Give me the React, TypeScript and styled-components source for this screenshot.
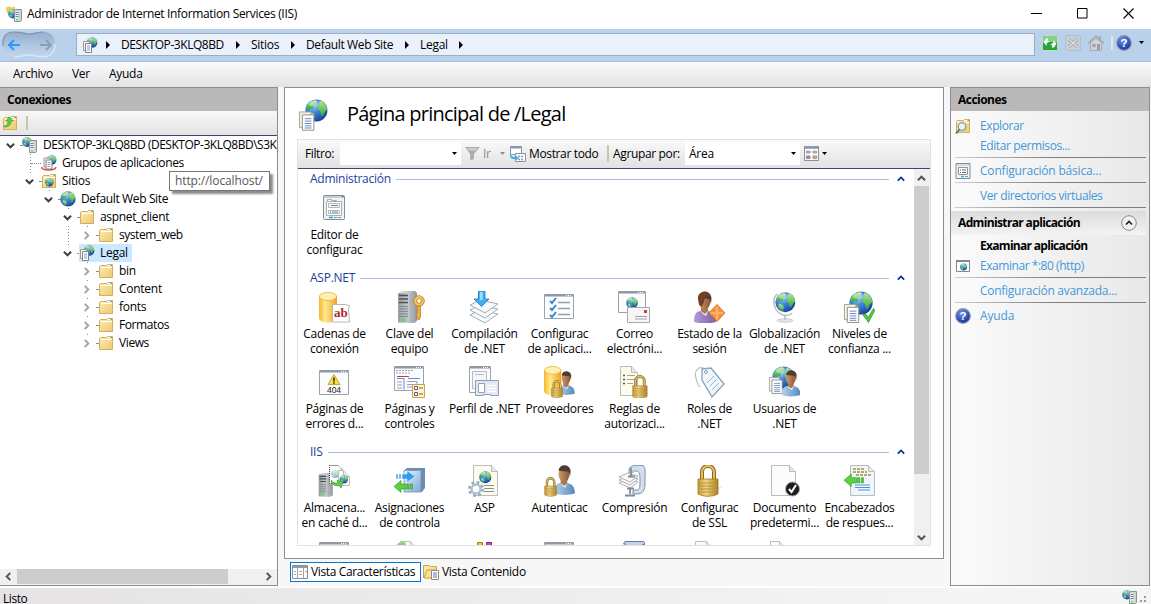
import React from "react";
import styled, { createGlobalStyle } from "styled-components";

const GlobalStyle = createGlobalStyle`
  * { box-sizing: border-box; }
  body { margin: 0; background: #f7f7f7; overflow: hidden; }
  svg { display: block; flex: none; }
`;

/* ---------- layout ---------- */

const Window = styled.div`
  width: 1151px;
  height: 604px;
  display: flex;
  flex-direction: column;
  overflow: hidden;
  background: #f7f7f7;
  color: #000;
  font: 12px/18px "Open Sans", "Noto Sans", sans-serif;
  letter-spacing: -0.27px;
  white-space: nowrap;
`;

const TitleBar = styled.header`
  height: 29px;
  flex: none;
  display: flex;
  align-items: center;
  padding: 0 17px 2px 6px;
  background: #fff;
`;

const TitleText = styled.h1`
  flex: 1;
  margin: 0 0 0 5px;
  font: inherit;
  letter-spacing: -0.34px;
`;

const WindowControls = styled.div`
  display: flex;
  gap: 35px;
`;

const NavBar = styled.nav`
  height: 33px;
  flex: none;
  display: flex;
  align-items: center;
  background: #b9d1ea;
  border-bottom: 1px solid #a5bad8;
  padding: 0 8px 1px 2px;
`;

const AddressBar = styled.div`
  width: 959px;
  height: 23px;
  margin: 0 7px 0 20px;
  padding: 0 0 0 5px;
  flex: none;
  display: flex;
  align-items: center;
  background: #ebf1fa;
  border: 1px solid #9aaec9;
`;

const Crumb = styled.span<{ $w: number; $ls?: number }>`
  width: ${(p) => p.$w}px;
  margin-left: 11px;
  letter-spacing: ${(p) => p.$ls ?? -0.27}px;
`;

const NavTools = styled.div`
  display: flex;
  align-items: center;
  gap: 7px;
  padding-bottom: 4px;
`;

const MenuBar = styled.div`
  height: 25px;
  flex: none;
  display: flex;
  align-items: center;
  gap: 19px;
  padding: 0 13px 1px;
  background: linear-gradient(#fbfbfb, #e4e2e3);
`;

const Body = styled.main`
  height: 499px;
  flex: none;
  display: flex;
`;

const SidePanel = styled.aside<{ $width: number; $right?: boolean }>`
  width: ${(p) => p.$width}px;
  display: flex;
  flex-direction: column;
  border: 1px solid #8e8c8d;
  border-left-width: ${(p) => (p.$right ? 1 : 0)}px;
  background: ${(p) =>
    p.$right ? "linear-gradient(to right, #fbfbfb, #e9e8e9)" : "#fff"};
`;

const PanelTitle = styled.h2`
  height: 23px;
  flex: none;
  margin: 0;
  padding: 3px 7px;
  background: #bbb8ba;
  font: bold 12px/18px "Open Sans", "Noto Sans", sans-serif;
  letter-spacing: -0.52px;
`;

const TreeTools = styled.div`
  height: 25px;
  flex: none;
  display: flex;
  align-items: center;
  gap: 8px;
  padding-left: 2px;
  background: linear-gradient(#f8f8f8, #e4e2e3);
  border-bottom: 1px solid #44446a;
`;

const Separator = styled.i<{ $h: number; $color?: string; $gap?: string }>`
  width: 2px;
  height: ${(p) => p.$h}px;
  margin: ${(p) => p.$gap ?? "0"};
  flex: none;
  background: ${(p) => p.$color ?? "#c6c5b2"};
`;

const Tree = styled.div`
  flex: 1;
  position: relative;
`;

const TreeRow = styled.div`
  height: 18px;
  display: flex;
  align-items: center;
  padding-left: 1px;
`;

const Guide = styled.span<{ $line?: boolean }>`
  width: 19px;
  height: 18px;
  flex: none;
  display: flex;
  align-items: center;
  justify-content: center;
  background: ${(p) =>
    p.$line
      ? "repeating-linear-gradient(#8a8a8a 0 1px, transparent 1px 3px) 10px 0 / 1px 18px no-repeat"
      : "none"};
`;

const Twisty = styled.span`
  width: 13px;
  height: 14px;
  display: flex;
  align-items: center;
  justify-content: center;
  background: #fff;
`;

const Stub = styled.span<{ $wide?: boolean }>`
  width: ${(p) => (p.$wide ? 10 : 2)}px;
  margin-left: ${(p) => (p.$wide ? -8 : 0)}px;
  flex: none;
  border-top: 1px dotted #8a8a8a;
`;

const TreeLabel = styled.span<{ $selected?: boolean; $ls?: number }>`
  height: 18px;
  padding: 0 4px 0 0;
  display: flex;
  align-items: center;
  gap: 5px;
  letter-spacing: ${(p) => p.$ls ?? -0.27}px;
  background: ${(p) => (p.$selected ? "#cce8ff" : "transparent")};
`;

const Tooltip = styled.div`
  position: absolute;
  left: 169px;
  top: 35px;
  width: 101px;
  height: 20px;
  padding-left: 5px;
  background: #fff;
  border: 1px solid #767676;
  box-shadow: 3px 3px 2px rgba(0, 0, 0, 0.45);
  color: #575757;
  letter-spacing: -0.12px;
`;

const HScroll = styled.div`
  height: 16px;
  flex: none;
  display: flex;
  align-items: center;
  justify-content: space-between;
  padding: 0 4px 2px;
  background: linear-gradient(#cdcdcd, #cdcdcd) 17px 0 / 211px 15px no-repeat
    #f0f0f0;
`;

const Center = styled.section`
  width: 672px;
  padding: 0 6px;
  display: flex;
  flex-direction: column;
`;

const Page = styled.div`
  height: 472px;
  flex: none;
  display: flex;
  flex-direction: column;
  background: #fff;
  border: 1px solid #8e8c8d;
  padding: 0 12px 12px;
`;

const PageHead = styled.div`
  height: 51px;
  flex: none;
  display: flex;
  align-items: center;
  gap: 16px;
  padding: 3px 0 0 2px;
`;

const PageTitle = styled.h3`
  margin: -3px 0 0;
  font: 20px/26px "Open Sans", "Noto Sans", sans-serif;
  letter-spacing: -0.76px;
`;

const FeatureBox = styled.div`
  height: 407px;
  display: flex;
  flex-direction: column;
  border: 1px solid #e2e1e2;
`;

const FilterBar = styled.div`
  height: 29px;
  flex: none;
  display: flex;
  align-items: center;
  padding: 0 0 1px 7px;
  background: linear-gradient(#fafafa, #e3e1e2);
  border-bottom: 1px solid #44446a;
`;

const FilterLabel = styled.span<{ $w: number; $muted?: boolean; $ls?: number; $left?: number }>`
  width: ${(p) => p.$w}px;
  margin-left: ${(p) => p.$left ?? 3}px;
  flex: none;
  color: ${(p) => (p.$muted ? "#8d8d8d" : "#000")};
  letter-spacing: ${(p) => p.$ls ?? -0.27}px;
`;

const Combo = styled.div<{ $w: number }>`
  width: ${(p) => p.$w}px;
  height: 23px;
  margin-right: 4px;
  flex: none;
  display: flex;
  align-items: center;
  justify-content: space-between;
  padding: 0 4px;
  background: #fff;
`;

const MenuCaret = styled.span<{ $left: number; $right?: number }>`
  margin: 0 ${(p) => p.$right ?? 0}px 0 ${(p) => p.$left}px;
`;

const Features = styled.div`
  flex: 1;
  min-height: 0;
  display: flex;
`;

const FeatureList = styled.div`
  width: 616px;
  overflow: hidden;
  margin-top: -1px;
`;

const GroupHead = styled.div`
  height: 24px;
  display: flex;
  align-items: center;
  gap: 5px;
  padding: 0 9px 2px 12px;
  color: #1e3d9b;
  letter-spacing: -0.25px;
`;

const Rule = styled.i`
  flex: 1;
  height: 1px;
  background: #afbde0;
  margin-right: 3px;
`;

const Grid = styled.div`
  display: grid;
  grid-template-columns: repeat(8, 75px);
  grid-auto-rows: 75px;
  margin-left: -1px;
`;

const Tile = styled.div`
  display: flex;
  flex-direction: column;
  align-items: center;
  gap: 3px;
  line-height: 15px;
  text-align: center;
  white-space: pre;

  svg { margin-left: -1px; }
`;

const VScroll = styled.div`
  width: 16px;
  display: flex;
  flex-direction: column;
  justify-content: space-between;
  align-items: center;
  padding: 5px 1px 3px 0;
  background: linear-gradient(#cdcdcd, #cdcdcd) 0 17px / 15px 288px no-repeat
    #f0f0f0;
`;

const ViewTabs = styled.div`
  display: flex;
  padding: 3px 0 0 6px;
`;

const ViewTab = styled.div<{ $active?: boolean }>`
  width: ${(p) => (p.$active ? "131px" : "auto")};
  height: 20px;
  display: flex;
  align-items: center;
  gap: 3px;
  padding: 0 4px 0 1px;
  border: 1px solid ${(p) => (p.$active ? "#0078d7" : "transparent")};
  background: ${(p) => (p.$active ? "#fff" : "none")};
  letter-spacing: ${(p) => (p.$active ? -0.36 : -0.28)}px;
`;

const Actions = styled.div`
  padding: 5px 3px 0 4px;
`;

const Action = styled.div<{ $tall?: boolean; $strong?: boolean; $ls?: number }>`
  height: ${(p) => (p.$tall ? 24 : 20)}px;
  padding-top: ${(p) => (p.$tall ? 2 : 0)}px;
  display: flex;
  align-items: center;
  gap: 8px;
  color: ${(p) => (p.$strong ? "#000" : "#4498d6")};
  font-weight: ${(p) => (p.$strong ? 700 : 400)};
  letter-spacing: ${(p) => p.$ls ?? -0.15}px;
`;

const IconSlot = styled.span`
  width: 17px;
  height: 16px;
`;

const Divider = styled.i<{ $gap?: boolean }>`
  display: block;
  height: 1px;
  margin-top: ${(p) => (p.$gap ? 1 : 0)}px;
  background: linear-gradient(to right, #d0d0d0, #7f7f7f 50%);
`;

const ActionGroup = styled.div`
  height: 24px;
  margin: 3px 0 1px -4px;
  padding: 0 9px 0 7px;
  display: flex;
  align-items: center;
  justify-content: space-between;
  background: linear-gradient(#dddcdd, #f3f3f3);
  font-weight: 700;
  letter-spacing: -0.64px;
`;

const StatusBar = styled.footer`
  height: 18px;
  flex: none;
  display: flex;
  justify-content: space-between;
  padding: 2px 2px 0 3px;
  border-top: 2px solid #fdfdfd;
  background: linear-gradient(to right, #e5e3e4, #f4f4f4 80%, #f5f5f5);
`;

const StatusText = styled.span`
  padding-top: 2px;
  line-height: 14px;
  letter-spacing: -0.45px;
`;

/* ---------- icons ---------- */

const Svg = ({ s = 32, w, children }: { s?: number; w?: number; children: React.ReactNode }) => (
  <svg width={w ?? s} height={w ?? s} viewBox={`0 0 ${s} ${s}`}>{children}</svg>
);

type P = { x?: number; y?: number; k?: number };
const at = ({ x = 0, y = 0, k = 1 }: P) => `translate(${x} ${y}) scale(${k})`;

const HiddenSvg = styled.svg`
  position: absolute;
  width: 0;
  height: 0;
`;

const Defs = () => (
  <HiddenSvg>
    <defs>
      <radialGradient id="sea" cx="0.35" cy="0.3" r="0.75">
        <stop offset="0" stopColor="#9fd6fb" />
        <stop offset="0.4" stopColor="#3f86e0" />
        <stop offset="1" stopColor="#173f9e" />
      </radialGradient>
      <linearGradient id="land" x1="0" y1="0" x2="0" y2="1">
        <stop offset="0" stopColor="#b4e98d" />
        <stop offset="1" stopColor="#34a53c" />
      </linearGradient>
      <linearGradient id="gold">
        <stop offset="0" stopColor="#f6b62a" />
        <stop offset="0.35" stopColor="#ffe992" />
        <stop offset="1" stopColor="#eba41c" />
      </linearGradient>
      <linearGradient id="brass">
        <stop offset="0" stopColor="#c99a38" />
        <stop offset="0.4" stopColor="#f1d687" />
        <stop offset="1" stopColor="#b08024" />
      </linearGradient>
      <linearGradient id="manila" x1="0" y1="0" x2="1" y2="1">
        <stop offset="0" stopColor="#fdeeb5" />
        <stop offset="1" stopColor="#ecc873" />
      </linearGradient>
      <linearGradient id="steel">
        <stop offset="0" stopColor="#e6e9eb" />
        <stop offset="0.5" stopColor="#c8cdd0" />
        <stop offset="1" stopColor="#8f979c" />
      </linearGradient>
      <linearGradient id="steelFront">
        <stop offset="0" stopColor="#9ba1a5" />
        <stop offset="1" stopColor="#c5cacd" />
      </linearGradient>
      <linearGradient id="skin">
        <stop offset="0" stopColor="#cf9a6c" />
        <stop offset="1" stopColor="#8a5835" />
      </linearGradient>
      <linearGradient id="shirt">
        <stop offset="0" stopColor="#b4d3ec" />
        <stop offset="1" stopColor="#5588ba" />
      </linearGradient>
      <linearGradient id="purple">
        <stop offset="0" stopColor="#b39bd2" />
        <stop offset="1" stopColor="#7c60aa" />
      </linearGradient>
      <linearGradient id="glass" x1="0" y1="0" x2="1" y2="1">
        <stop offset="0" stopColor="#eef5fd" />
        <stop offset="1" stopColor="#7ea6d8" />
      </linearGradient>
      <linearGradient id="well" x1="0" y1="0" x2="0" y2="1">
        <stop offset="0" stopColor="#93aecd" />
        <stop offset="0.5" stopColor="#adc4df" />
        <stop offset="1" stopColor="#c3d8ee" />
      </linearGradient>
      <radialGradient id="help" cx="0.4" cy="0.3" r="0.7">
        <stop offset="0" stopColor="#6f93ea" />
        <stop offset="1" stopColor="#15329e" />
      </radialGradient>
    </defs>
  </HiddenSvg>
);

/* 24-unit globe */
const Globe = (p: P) => (
  <g transform={at(p)}>
    <circle cx="12" cy="12" r="11.6" fill="url(#sea)" />
    <path d="M2.5 6 6 2.500 11 .8 13 2.500 11 4.500 12 6.500 9.500 8 8.500 11 6 10 4.500 11.500 1.500 10z" fill="url(#land)" />
    <path d="M15 1.500 19 3l3.500 4 .8 4.500L21 13l-2 4.500-2 .5-1-5-3-2 .5-3.500 2-1.500z" fill="url(#land)" />
    <path d="M5 13.500 9 15l1.500 3-1.500 4-3-1.500-2.500-4z" fill="url(#land)" />
    <ellipse cx="10" cy="5" rx="6" ry="3" fill="#fff" opacity=".35" />
  </g>
);

/* 13 x 17 text page */
const TextPage = (p: P) => (
  <g transform={at(p)}>
    <path d="M.5.5h12v16H.5z" fill="#fff" stroke="#8f8d86" />
    <path d="M3 4.500h7M3 7h7M3 9.500h7M3 12h7M3 14.200h7" stroke="#4a78bd" strokeWidth=".9" />
  </g>
);

const Docs = (p: P) => (
  <g transform={at(p)}>
    <path d="M.5.5h12v16H.5z" fill="#f7f3ec" stroke="#a39f97" />
    <TextPage x={3} y={3} />
  </g>
);

/* two pages for the 16px icons */
const SmallDocs = ({ x = 0, y = 0 }: P) => (
  <g transform={at({ x, y })}>
    <path d="M.5.5h6v9h-6z" fill="#faf8f4" stroke="#9b9892" />
    <path d="M2.500 2.500h6v9h-6z" fill="#fff" stroke="#85837d" />
    <path d="M4 5h3M4 7h3M4 9h3" stroke="#6d92c8" strokeWidth=".9" />
  </g>
);

/* server tower for the 16px icons */
const SmallServer = ({ x = 0, y = 0 }: P) => (
  <g transform={at({ x, y })}>
    <path d="M.5 1.500 2 .5h5.500v11l-1 1h-6z" fill="#cfd3d6" stroke="#8c9398" />
    <path d="M1 2h3.500v10H1z" fill="#e9ecee" />
    <path d="M1.500 3.500h3M1.500 5.500h3M1.500 7.500h3" stroke="#6d757b" strokeWidth=".9" />
    <path d="M2 10h2v1.500H2z" fill="#4be33a" />
  </g>
);

/* blank sheet with a folded corner */
const Sheet = ({ fill = "#fcfcfc", w = 24, h = 31, ...p }: P & { fill?: string; w?: number; h?: number }) => (
  <g transform={at(p)}>
    <path d={`M.5.5H${w - 6.5}l6 6V${h - 0.5}H.5z`} fill={fill} stroke="#bcbcbc" />
    <path d={`M${w - 6.5}.5v6h6`} fill="#e9e9e9" stroke="#bcbcbc" />
  </g>
);

const Cyl = (p: P) => (
  <g transform={at(p)}>
    <path d="M0 4v22c0 2.500 4 4.500 9 4.500s9-2 9-4.500V4z" fill="url(#gold)" />
    <ellipse cx="9" cy="4.500" rx="8.600" ry="4" fill="#ffefb0" stroke="#eeb030" strokeWidth=".8" />
  </g>
);

const Server = (p: P) => (
  <g transform={at(p)}>
    <path d="M1 2 5 0h13l2 2v28l-3 2H1z" fill="url(#steel)" />
    <path d="M1 2h11v29.500H1z" fill="url(#steelFront)" />
    <path d="M2 4.500h9M2 8h9M2 11.500h9" stroke="#4b5155" strokeWidth="1.500" />
    <path d="M2 15.500h9M2 18h9M2 20.500h9M2 23h9M2 25.500h9" stroke="#7d8489" strokeWidth=".9" />
    <circle cx="6.500" cy="28.800" r="1.600" fill="#4be33a" />
    <path d="M14 3v27M17 3v26" stroke="#a3aaae" />
  </g>
);

const Lock = (p: P) => (
  <g transform={at(p)}>
    <path d="M5 15V8a6 6 0 0 1 12 0v7" fill="none" stroke="#8d6819" strokeWidth="4" />
    <path d="M5 15V8a6 6 0 0 1 12 0v7" fill="none" stroke="#e2c06a" strokeWidth="2" />
    <path d="M1 15h20v15c-6 3-14 3-20 0z" fill="url(#brass)" stroke="#9c7522" strokeWidth=".8" />
    <path d="M2 19h18M2 22h18M2 25h18M3 28h16" stroke="#b58c35" strokeWidth=".9" />
  </g>
);

/* 22 x 31 person */
const Person = ({ body = "url(#shirt)", ...p }: P & { body?: string }) => (
  <g transform={at(p)}>
    <path d="M0 30c0-8 2-10 6-11h8c5 1 8 4 8 11-7 2-15 2-22 0z" fill={body} />
    <path d="m7 19 2 3 3 2 2-5z" fill="#f0f4f8" />
    <path d="M7 14h7v5l-3 3-4-3z" fill="#a9764d" />
    <ellipse cx="10.500" cy="9.500" rx="5.800" ry="8" fill="url(#skin)" />
    <path d="M5 6c0-7 11-8 12.500 0L17 12l-1.500-5z" fill="#4f3c33" />
  </g>
);

const Frame = ({ w = 30, h = 24, ...p }: P & { w?: number; h?: number }) => (
  <g transform={at(p)}>
    <path d={`M.5.5h${w - 1}v${h - 1}H.5z`} fill="#fbfcfd" stroke="#9ba2ab" />
    <path d={`M1 1.500h${w - 2}`} stroke="#8d97a4" strokeWidth="2" />
    <path d={`M${w - 8} 1.500h6`} stroke="#fff" strokeDasharray="1 1" />
  </g>
);

const Gear = (p: P) => (
  <g transform={at(p)}>
    <circle cx="8" cy="8" r="6.500" fill="none" stroke="#98a8b8" strokeWidth="3" strokeDasharray="2.55 2.55" />
    <circle cx="8" cy="8" r="4.500" fill="#fff" stroke="#b1c0d0" strokeWidth="2.500" />
  </g>
);

const ArrowLeftGreen = (p: P) => (
  <path transform={at(p)} d="M0 6 7 0v3.500h5v5H7V12zM13 3.500h2v5h-2zM16.500 3.500h2v5h-2z" fill="#5fd040" stroke="#2e9a1c" strokeWidth=".6" />
);

const icons: Record<string, React.ReactNode> = {
  editor: (<>
    <rect x="5.500" y="3.500" width="21" height="24" rx="1" fill="#eef1f4" stroke="#848b92" />
    <path d="M6 5h20" stroke="#c7cdd3" strokeWidth="2" />
    <path d="M24 4.500h1.500" stroke="#3b4248" />
    <path d="M8.500 9.500h15v14h-15z" fill="#fff" stroke="#a8b0b7" />
    <path d="M9.500 7.500h4v2h-4zM14.500 8.500h4v1h-4z" fill="#fff" stroke="#a8b0b7" />
    <path d="M10.500 11.500h11v4h-11zM10.500 18.500h11v3h-11z" fill="#f6f7f8" stroke="#b3bac0" />
    <path d="M13 13.500h7M14 20h6" stroke="#7a828a" /><path d="M12 20h1" stroke="#5d666e" />
    <path d="M11 25.500h4" stroke="#19b4e8" strokeWidth="1.500" /><path d="M16 25.500h3M20 25.500h3" stroke="#8b939a" />
  </>),
  basic: (<>
    <path d="M1 .5h14v15H1z" fill="#f1f3f5" stroke="#848b92" />
    <path d="M1 2h14" stroke="#c0c6cc" />
    <path d="M3.500 4.500h9v7h-9z" fill="#fff" stroke="#8e969d" />
    <path d="M5 7h1M7 7h4M5 9.500h1M7 9.500h4" stroke="#59616a" />
    <path d="M6 13.500h3" stroke="#19b4e8" strokeWidth="1.500" /><path d="M10 13.500h3" stroke="#8b939a" />
  </>),
  conn: (<>
    <Cyl x={1} y={1} />
    <path d="M14.500 13.500H27l4.500 1-1 4 1 12.500H14.500z" fill="#fff" stroke="#b9b5b5" />
    <text x="16" y="26" fontFamily="Liberation Serif" fontWeight="700" fontSize="13" letterSpacing="0" fill="#a82a26">ab</text>
  </>),
  key: (<>
    <Server x={4} y={0} />
    <circle cx="26" cy="10" r="3.800" fill="none" stroke="#b97a1e" strokeWidth="3.800" /><circle cx="26" cy="10" r="3.800" fill="none" stroke="#f6c25a" strokeWidth="2.400" />
    <path d="M24.500 15h3v11L26 29l-3-2 1.500-1.500-1.500-2 1.500-1.500z" fill="#eeb143" stroke="#b06f16" strokeWidth=".7" />
  </>),
  build: (<>
    {[27, 22, 17].map((y) => <path key={y} d={`M2 ${y - 3} 12 ${y - 8}l18 4-13 9z`} fill="#f9fafb" stroke="#98a3aa" strokeWidth=".9" />)}
    <path d="M10.500 0h6.500v8h4L13.500 15.500 6 8h4.500z" fill="#42b0f0" stroke="#1c79c2" strokeWidth=".8" />
    <path d="M12 1h2.500v8H12z" fill="#a3e0ff" />
  </>),
  settings: (<>
    <Frame x={1} y={3} h={25} />
    <path d="m7 10 2 2 4-5M7 17l2 2 4-5M7 24l2 2 4-5" fill="none" stroke="#3a86d2" strokeWidth="2" />
    <path d="M15 11.500h12M15 17.500h12M15 23.500h12" stroke="#999fa8" strokeWidth="1.300" />
  </>),
  mail: (<>
    <Frame x={0} y={0} w={28} h={22} /><Globe x={8} y={6} k={0.5} />
    <path d="M9.500 16.500h22v15h-22z" fill="#f7f6f6" stroke="#a9a7a7" />
    <path d="M26 19h3v3h-3z" fill="#d4392f" /><path d="M17 25.500h12M17 28h12" stroke="#a3a1a1" />
  </>),
  session: (<>
    <Person x={1} y={1} body="url(#purple)" />
    <path d="M5 8c-1-9 12-10 12.500-3L12 5.500l-1 5-2 5-3-2z" fill="#70401f" />
    <path d="m24 13.500 8 8.500-8 8.500L16 22z" fill="#f7923a" stroke="#c8641a" strokeWidth=".8" />
    <path d="M24 15.500v13M17.500 22h13" stroke="#ffd3a2" strokeWidth="1" /><path d="m24 19 3 3-3 3-3-3z" fill="#ffb569" />
  </>),
  globe: (<>
    <ellipse cx="17" cy="29.500" rx="8" ry="1.800" fill="#e2e4e6" stroke="#b4b8bb" strokeWidth=".6" />
    <path d="M17 24v5M9 3c-6 6-3 18 6 21 4 1 8 0 9-2" fill="none" stroke="#b9bdc1" strokeWidth="1.500" />
    <Globe x={7} y={1} k={0.86} />
  </>),
  trust: (<>
    <Globe x={6} y={0} /><Docs x={1} y={13} k={0.95} />
    <path d="m20 24 2.500-1.500 2.500 4 5.500-9 1.500 1.500-6.500 12.500z" fill="#55c844" stroke="#2b8f22" strokeWidth=".7" />
  </>),
  error: (<>
    <Frame x={1} y={4} h={25} />
    <path d="M16 8.500 22 18.500H10z" fill="#fbdd4a" stroke="#b5952a" strokeWidth=".8" /><path d="M16 11.500v4M16 16.300v1.400" stroke="#1d1d1d" strokeWidth="1.400" />
    <text x="16" y="27" textAnchor="middle" fontFamily="Liberation Sans" fontSize="8.500" letterSpacing="0" fill="#222">404</text>
  </>),
  pages: (<>
    <Frame x={1} y={0} w={30} h={25} />
    <path d="M3 4.500h18M3 7h14" stroke="#9ba5b1" strokeDasharray="2 1" /><path d="M4 10.500h12" stroke="#d3383c" /><path d="M15 12.500h12M11 12.500v11M4 12.500h7" stroke="#5b8fe6" />
    <path d="M4 16h5M4 19h5M4 22h5M14 15.500h10v3h-10M14 21h5" fill="none" stroke="#8e96a1" strokeWidth=".9" />
    <path d="M19.500 18.500h12v13h-12z" fill="#fdf4c8" stroke="#c5a64d" />
    <path d="M21.500 20.500h3v3h-3zM21.500 26.500h3v3h-3z" fill="#fff" stroke="#6c4f8c" /><path d="M26 22h4M26 28h4" stroke="#6c6458" />
  </>),
  profile: (<>
    <Frame x={1} y={0} w={22} h={27} /><path d="M4.500 5.500h14v17h-14zM7 8.500h9" fill="#f4f6f8" stroke="#b5bbc3" />
    <path d="M7.500 14.500h23v15h-8v-1h-7v1h-8z" fill="#dfe8f3" stroke="#939dab" /><path d="M10.500 17.500h6v9h-6z" fill="#fff" stroke="#8fa4bd" /><path d="M19 19.500h9M19 22.500h9M19 25.500h9" stroke="#fff" strokeWidth="1.500" />
  </>),
  providers: (<><Cyl x={1} y={0} k={0.96} /><Person x={15} y={5} k={0.76} /><Lock x={8} y={14} k={0.55} /></>),
  rules: (<>
    <Sheet x={2} y={0} w={18} h={30} fill="#fdfbea" />
    <path d="M5 9.500h2M5 13.500h2M5 17.500h2" stroke="#555" strokeWidth="1.500" /><path d="M9 9.500h8M9 13.500h8M9 17.500h6" stroke="#a3a3a3" />
    <Lock x={14} y={9} k={0.72} />
  </>),
  roles: (<>
    <path d="M12 3C5-1 1 5 3 12s2 8 4 9" fill="none" stroke="#b8c0c8" strokeWidth="1.200" />
    <path d="m9 3 9-1 13 16-12 13L9 14z" fill="#f1f6fc" stroke="#86a3c0" strokeWidth="1.300" />
    <circle cx="13" cy="6" r="1.500" fill="#fff" stroke="#7f9dbb" />
    <path d="m14 17 7-7M16.500 20.500l7-7M19 24l7-7" stroke="#9ab4ce" strokeWidth="1" />
  </>),
  users: (<><Globe x={4} y={0} k={0.95} /><Docs x={1} y={11} k={0.85} /><Person x={14} y={4} k={0.84} /></>),
  cache: (<>
    <Server x={0} y={8} k={0.74} />
    <path d="M11.500.5H20l4 4v14H11.500z" fill="#fff" stroke="#333" strokeDasharray="1 1" />
    <g opacity=".45"><Globe x={13} y={5} k={0.34} /></g>
    <Sheet x={20} y={5} w={12} h={16} /><Globe x={21.5} y={10} k={0.36} />
    <path d="M13 15c2 3 5 3.500 7 2.500l-1-2.500 6 2-2 6-1.500-2.500c-4 1-8-1-8.500-5.500z" fill="#5fcf45" stroke="#2b8f20" strokeWidth=".6" />
  </>),
  handlers: (<>
    <path d="M11 5.500 14 3h18v20l-3 4H11z" fill="#6f8cb0" /><path d="M11 5.500h17V27H11z" fill="url(#glass)" stroke="#6f93c0" strokeWidth=".8" />
    <path d="M3 9h2v5H3zM6 9h2v5H6zM9 9h5V5.500l8 6-8 6V14H9z" fill="#2f9dee" stroke="#e6f4ff" strokeWidth=".6" />
    <ArrowLeftGreen x={1} y={15.5} />
  </>),
  asp: (<>
    <Sheet x={5} y={0} fill="#fdfbea" w={25} /><Globe x={11} y={6} k={0.52} />
    <path d="M16 20.500h10M16 23.500h10M16 26.500h10" stroke="#888ba0" /><Gear x={0} y={16} />
  </>),
  auth: (<><Person x={11} y={0} k={0.95} /><Lock x={1} y={12} k={0.6} /></>),
  compress: (<>
    <path d="M11 8V5c0-5 8-5 13-4.500 4 .5 3 4.500 3 13.500s0 14-7 15h-5v-4h3c4 0 4-3 4-9s0-10-4-10-3 0-3 2" fill="#d3deec" stroke="#7c8fa8" />
    {[20, 17, 14].map((y) => <path key={y} d={`M1 ${y - 2} 10 ${y - 6}l10 3-8 6z`} fill="#f9f9f9" stroke="#a0a0a0" strokeWidth=".8" />)}
    <path d="M13 3v8M10 11.500h7M12 23v6M9 23.500h7M7 30.500h10" stroke="#7f8b9a" strokeWidth="1.800" />
  </>),
  ssl: (<><path d="M20 24 30 21l-8 8z" fill="#ddd" opacity=".7" /><Lock x={4} y={-1} k={1} /></>),
  doc: (<>
    <Sheet x={3} y={0} w={25} h={31} /><circle cx="24.500" cy="24" r="7" fill="#1e1e1e" stroke="#a5a5a5" />
    <path d="m21 24 2.500 3 4.500-7" fill="none" stroke="#fff" strokeWidth="2" />
  </>),
  headers: (<>
    <Sheet x={7} y={0} w={25} fill="#edf7fb" />
    <path d="M10 4h11M10 7h14M13 10h15" stroke="#a88f3c" strokeWidth="1.300" strokeDasharray="3 1" /><path d="M12 20h15M15 25h12M12 22.500h15" stroke="#5590d6" strokeWidth="1" />
    <ArrowLeftGreen x={1} y={9} k={1.05} />
  </>),
  frameCut: <Frame x={1} y={2} w={30} h={25} />,
  sheetGreen: (<><Sheet x={7} y={1} w={17} /><path d="M4 4.500c3-3 7-3 9-1V5H4z" fill="#8fd083" /></>),
  modules: (<><path d="M9.500 2.500h5v8h-5z" fill="#efc332" stroke="#a17b14" /><path d="M18.500 2.500h5v8h-5z" fill="#c24ccb" stroke="#7f2788" /></>),
  logs: <path d="M5.500 4 7 1.500h18l1.500 1v2h-2v20h-17V4z" fill="#c5d2e8" stroke="#6677a0" />,
  sheetCream: <Sheet x={2} y={1} w={18} fill="#fdfbea" />,
  sheet: <Sheet x={2} y={1} w={16} />,
};

const Folder = ({ children }: { children?: React.ReactNode }) => (
  <Svg s={16}>
    <path d="M1.500 14.500v-11l1-1h6l1-1h5v13z" fill="url(#manila)" stroke="#d6ae55" />
    <path d="M9.500 2.500h4.500M3 4.500h11" stroke="#fff" strokeWidth="1" />
    <path d="M12.500 2.500H14" stroke="#4b9ae0" />
    {children}
  </Svg>
);

const treeIcons: Record<string, React.ReactNode> = {
  server: <Svg s={16}><Globe x={0} y={0} k={0.42} /><SmallServer x={7} y={3} /></Svg>,
  pools: (
    <Svg s={16}>
      <Globe x={5.5} y={0} k={0.42} /><SmallDocs x={2.5} y={2.5} />
      <path d="M.8 12c0 4 14 4 14 0" fill="none" stroke="#d0524d" strokeWidth="1.500" />
    </Svg>
  ),
  sites: <Folder><Globe x={4} y={5} k={0.36} /></Folder>,
  globe: <Svg s={16}><Globe x={0} y={0} k={0.66} /></Svg>,
  folder: <Folder />,
  app: <Svg s={16}><Globe x={4.5} y={0} k={0.46} /><SmallDocs x={1} y={4} /></Svg>,
};

const Chevron = ({ dir, color = "#404040", w = 9 }: { dir: string; color?: string; w?: number }) => {
  const d: Record<string, string> = { down: "m1 3 4 4 4-4", up: "m1 7 4-4 4 4", right: "m3 1 4 4-4 4", left: "m7 1-4 4 4 4" };
  return <svg width={w} height={w} viewBox="0 0 10 10"><path d={d[dir]} fill="none" stroke={color} strokeWidth="2.200" /></svg>;
};

const Caret = ({ color = "#000" }: { color?: string }) => (
  <svg width="5" height="3" viewBox="0 0 5 3"><path d="M0 0h5L2.500 3z" fill={color} /></svg>
);

const CrumbArrow = styled.i<{ $first?: boolean }>`
  width: 0;
  margin-left: ${(p) => (p.$first ? 8 : 11)}px;
  border: 4px solid transparent;
  border-left: 4px solid #000;
  border-right: 0;
`;

const HelpIcon = () => (
  <Svg s={16}>
    <circle cx="8" cy="8" r="7.300" fill="url(#help)" stroke="#8f98b5" strokeWidth="1.200" />
    <text x="8" y="12" textAnchor="middle" fontFamily="Liberation Sans" fontWeight="700" fontSize="11.500" letterSpacing="0" fill="#fff">?</text>
  </Svg>
);

/* ---------- data ---------- */

type Node = { level: number; text: string; icon: string; open?: boolean; guides?: number[]; selected?: boolean; ls?: number };
const tree: Node[] = [
  { level: 0, text: "DESKTOP-3KLQ8BD (DESKTOP-3KLQ8BD\\S3K", icon: "server", open: true, ls: -0.48 },
  { level: 1, text: "Grupos de aplicaciones", icon: "pools", guides: [1], ls: -0.36 },
  { level: 1, text: "Sitios", icon: "sites", open: true, guides: [1] },
  { level: 2, text: "Default Web Site", icon: "globe", open: true, guides: [2], ls: -0.36 },
  { level: 3, text: "aspnet_client", icon: "folder", open: true, guides: [3], ls: -0.34 },
  { level: 4, text: "system_web", icon: "folder", open: false, guides: [3, 4], ls: -0.45 },
  { level: 3, text: "Legal", icon: "app", open: true, guides: [3], selected: true },
  { level: 4, text: "bin", icon: "folder", open: false, guides: [4] },
  { level: 4, text: "Content", icon: "folder", open: false, guides: [4] },
  { level: 4, text: "fonts", icon: "folder", open: false, guides: [4] },
  { level: 4, text: "Formatos", icon: "folder", open: false, guides: [4], ls: -0.4 },
  { level: 4, text: "Views", icon: "folder", open: false, guides: [4], ls: -0.4 },
];

const groups: { name: string; items: [string, string][] }[] = [
  { name: "Administración", items: [["editor", "Editor de\nconfigurac"]] },
  {
    name: "ASP.NET",
    items: [
      ["conn", "Cadenas de\nconexión"], ["key", "Clave del\nequipo"], ["build", "Compilación\nde .NET"],
      ["settings", "Configurac\nde aplicaci..."], ["mail", "Correo\nelectróni..."], ["session", "Estado de la\nsesión"],
      ["globe", "Globalización\nde .NET"], ["trust", "Niveles de\nconfianza ..."], ["error", "Páginas de\nerrores d..."],
      ["pages", "Páginas y\ncontroles"], ["profile", "Perfil de .NET"], ["providers", "Proveedores"],
      ["rules", "Reglas de\nautorizaci..."], ["roles", "Roles de\n.NET"], ["users", "Usuarios de\n.NET"],
    ],
  },
  {
    name: "IIS",
    items: [
      ["cache", "Almacena...\nen caché d..."], ["handlers", "Asignaciones\nde controla"], ["asp", "ASP"], ["auth", "Autenticac"],
      ["compress", "Compresión"], ["ssl", "Configurac\nde SSL"], ["doc", "Documento\npredetermi..."], ["headers", "Encabezados\nde respues..."],
      ["frameCut", ""], ["sheetGreen", ""], ["modules", ""], ["frameCut", ""], ["logs", ""], ["sheetCream", ""], ["sheet", ""],
    ],
  },
];

/* ---------- app ---------- */

export default function App() {
  return (
    <Window>
      <GlobalStyle />
      <Defs />
      <TitleBar>
        <Svg s={16}>
          <path d="M0 1.500 3 .5l3 1 3-1v5L5 8 1 7z" fill="#f1c850" /><Globe x={2} y={3} k={0.4} /><SmallServer x={8} y={3} />
        </Svg>
        <TitleText>Administrador de Internet Information Services (IIS)</TitleText>
        <WindowControls>
          <svg width="11" height="11"><path d="M0 5.500h11" stroke="#000" /></svg>
          <svg width="11" height="11"><path d="M.5.5h9.500v9.500H.5z" fill="none" stroke="#000" /></svg>
          <svg width="11" height="11"><path d="m.5.5 10 10m0-10-10 10" stroke="#000" strokeWidth="1.100" /></svg>
        </WindowControls>
      </TitleBar>

      <NavBar>
        <svg width="54" height="28" viewBox="0 0 54 28">
          <path d="M12 1c8 0 10 2 15 2s8-2 15-2c8 0 11 6 11 12s-4 13-11 13-10-2-15-2-8 2-15 2C5 26 1 19 1 13S4 1 12 1z" fill="url(#well)" />
          <path d="M1 15C0 6 4 1 12 1c8 0 10 2 15 2s8-2 15-2" fill="none" stroke="#7892b2" strokeWidth="1.200" />
          <path d="M12 26c8 0 10-2 15-2s8 2 15 2c7 0 11-6 11-13" fill="none" stroke="#dae7f5" strokeWidth="1.300" />
          <path d="M18 14H7m5-5-5 5 5 5" fill="none" stroke="#3296ff" strokeWidth="2" />
          <path d="M38 14h11m-5-5 5 5-5 5" fill="none" stroke="#8e9fb3" strokeWidth="2" />
        </svg>
        <AddressBar>
          {treeIcons.app}
          <CrumbArrow $first />
          <Crumb $w={104} $ls={-0.44}>DESKTOP-3KLQ8BD</Crumb><CrumbArrow />
          <Crumb $w={29}>Sitios</Crumb><CrumbArrow />
          <Crumb $w={88} $ls={-0.36}>Default Web Site</Crumb><CrumbArrow />
          <Crumb $w={28}>Legal</Crumb><CrumbArrow />
        </AddressBar>
        <NavTools>
          <Svg s={16}>
            <rect x=".5" y=".5" width="15" height="15" rx="1" fill="#28a538" stroke="#c8d6cf" /><path d="M1 1h14v6H1z" fill="#7fd283" />
            <path d="M4 3.500h2.500L5.500 6H8L4.500 8.500 5 11 1.500 7.500zM12 12.500H9.500l1-2.500H8l3.500-2.500L11 5l3.500 3.500z" fill="#fff" />
          </Svg>
          <Svg s={16}>
            <rect x=".5" y=".5" width="15" height="15" rx="1" fill="#c9ced5" stroke="#b4bdc8" /><path d="m3.500 4 9 8m0-8-9 8" stroke="#959ea9" strokeWidth="3" /><path d="m3.500 4 9 8m0-8-9 8" stroke="#e5e8ec" strokeWidth="1.300" />
          </Svg>
          <Svg s={16}>
            <path d="M2.500 8v7.500h11V8L8 3z" fill="#d0d3d7" stroke="#a5abb2" /><path d="M0 8.500 8 1l8 7.500M12 1v4" fill="none" stroke="#a3a9b0" strokeWidth="1.600" /><path d="M4.500 9h3v3h-3zM9 9h3v6H9z" fill="#989ea5" />
          </Svg>
          <Separator $h={14} $color="#dfe8ef" $gap="0 -4px 0 0" />
          <HelpIcon />
          <Caret />
        </NavTools>
      </NavBar>

      <MenuBar><span>Archivo</span><span>Ver</span><span>Ayuda</span></MenuBar>

      <Body>
        <SidePanel $width={278}>
          <PanelTitle>Conexiones</PanelTitle>
          <TreeTools>
            <Folder><path d="M2 11c3 0 4-2 4-5H3.500L7.500 2l4 4H9c0 4-2 6-7 6z" fill="#5fcb42" stroke="#3a9a28" strokeWidth=".6" /></Folder>
            <Separator $h={14} />
          </TreeTools>
          <Tree>
            {tree.map((n) => (
              <TreeRow key={n.text}>
                {Array.from({ length: n.level + 1 }, (_, i) => (
                  <Guide key={i} $line={n.guides?.includes(i)}>
                    {i === n.level && n.open !== undefined && (
                      <Twisty><Chevron dir={n.open ? "down" : "right"} color={n.open ? "#404040" : "#a6a6a6"} /></Twisty>
                    )}
                  </Guide>
                ))}
                <Stub $wide={n.open === undefined} />
                <TreeLabel $selected={n.selected} $ls={n.ls}>{treeIcons[n.icon]}<span>{n.text}</span></TreeLabel>
              </TreeRow>
            ))}
            <Tooltip>http://localhost/</Tooltip>
          </Tree>
          <HScroll><Chevron dir="left" color="#555" /><Chevron dir="right" color="#555" /></HScroll>
        </SidePanel>

        <Center>
          <Page>
            <PageHead>
              <Svg><Globe x={6} y={0} k={0.95} /><Docs x={0} y={12.5} k={0.96} /></Svg>
              <PageTitle>Página principal de /Legal</PageTitle>
            </PageHead>
            <FeatureBox>
              <FilterBar>
                <FilterLabel $w={35} $ls={-0.4} $left={0}>Filtro:</FilterLabel>
                <Combo $w={121}><span /><Caret /></Combo>
                <Svg s={16} w={15}><path d="M0 1h16L9.500 8.500V14l-4 1V8.500z" fill="#adadad" /><path d="M2 2h12l-3 3H5z" fill="#cdcdcd" /></Svg>
                <FilterLabel $w={17} $muted>Ir</FilterLabel>
                <MenuCaret $left={0} $right={5}><Caret color="#8d8d8d" /></MenuCaret>
                <Svg s={16}>
                  <path d="M.5.5h11v8H.5z" fill="#fff" stroke="#8991a5" /><path d="M0 1.500h12" stroke="#8d98b8" strokeWidth="2" />
                  <path d="M5.500 7.500h10v8h-10z" fill="#fff" stroke="#8a92a3" /><path d="M8 10.500h6M8 13.500h6" stroke="#8c98c2" strokeDasharray="2 1" strokeWidth="1.500" />
                  <path d="M0 8c0 5 2 5 5 5v2l4-3-4-3v2c-3 0-4-1-4-3z" fill="#42ace8" />
                </Svg>
                <FilterLabel $w={77} $ls={-0.36}>Mostrar todo</FilterLabel>
                <Separator $h={17} $gap="0 1px 0 1px" />
                <FilterLabel $w={72} $ls={-0.35}>Agrupar por:</FilterLabel>
                <Combo $w={115}><span>Área</span><Caret /></Combo>
                <Svg s={16} w={15}>
                  <path d="M.5.5h15v15H.5z" fill="#fff" stroke="#7e8692" /><path d="M0 1.500h16" stroke="#8d97ad" strokeWidth="3" />
                  <path d="M2.500 5.500h4v2h-4z" fill="#9cc88a" stroke="#9a9d94" /><path d="M9.500 5.500h4v2h-4z" fill="#8fd0ef" stroke="#9a9d94" />
                  <path d="M2.500 10.500h4v3h-4z" fill="#8d76d2" stroke="#9a9d94" /><path d="M9.500 10.500h4v3h-4z" fill="#e89a7e" stroke="#9a9d94" />
                </Svg>
                <MenuCaret $left={3}><Caret /></MenuCaret>
              </FilterBar>
              <Features>
                <FeatureList>
                  {groups.map((g) => (
                    <React.Fragment key={g.name}>
                      <GroupHead><span>{g.name}</span><Rule /><Chevron dir="up" color="#0b3193" w={8} /></GroupHead>
                      <Grid>
                        {g.items.map(([icon, label], i) => (
                          <Tile key={i}><Svg>{icons[icon]}</Svg>{label}</Tile>
                        ))}
                      </Grid>
                    </React.Fragment>
                  ))}
                </FeatureList>
                <VScroll><Chevron dir="up" color="#555" w={9} /><Chevron dir="down" color="#555" w={9} /></VScroll>
              </Features>
            </FeatureBox>
          </Page>
          <ViewTabs>
            <ViewTab $active>
              <Svg s={16}><path d="M.5 1.500h15v13H.5z" fill="#fff" stroke="#8b8b8b" /><path d="M1 3h14" stroke="#9a9a9a" strokeWidth="2" /><path d="M5.500 4v10M11.500 4v10M2 7.500h2M2 10.500h2M7 7.500h3M7 10.500h3M13 7.500h2" stroke="#a4a4a4" /></Svg>
              Vista Características
            </ViewTab>
            <ViewTab>
              <Svg s={16}><path d="M.5 13.500v-12h6l1 1h6v3L10 14z" fill="url(#manila)" stroke="#cfa347" /><path d="m1 14 3-8h9l-3 8z" fill="#f9e19a" stroke="#cfa347" /><path d="M8.500 6.500h7v9h-7z" fill="#fff" stroke="#8f8d86" /><path d="M10 9h4M10 11h4M10 13h4" stroke="#4a78bd" /></Svg>
              Vista Contenido
            </ViewTab>
          </ViewTabs>
        </Center>

        <SidePanel $width={200} $right>
          <PanelTitle>Acciones</PanelTitle>
          <Actions>
            <Action $ls={-0.4}>
              <IconSlot><Folder><circle cx="7" cy="8.500" r="3.800" fill="#e6f2fa" stroke="#8b98a5" strokeWidth="1.300" /><path d="m4.500 11.500-3.500 4" stroke="#666e77" strokeWidth="1.800" /></Folder></IconSlot>
              Explorar
            </Action>
            <Action $ls={-0.4}><IconSlot />Editar permisos...</Action>
            <Divider $gap />
            <Action $tall $ls={-0.19}>
              <IconSlot><Svg s={16}>{icons.basic}</Svg></IconSlot>
              Configuración básica...
            </Action>
            <Divider />
            <Action $tall $ls={-0.42}><IconSlot />Ver directorios virtuales</Action>
            <Divider />
            <ActionGroup>
              Administrar aplicación
              <Svg s={16}><circle cx="8" cy="8" r="7.300" fill="#f1f0f1" stroke="#8a8889" /><path d="m5 9.500 3-3 3 3" fill="none" stroke="#222" strokeWidth="1.700" /></Svg>
            </ActionGroup>
            <Action $strong $ls={-0.7}><IconSlot />Examinar aplicación</Action>
            <Action $ls={-0.45}>
              <IconSlot><Svg s={16}><path d="M1.500 2.500h13v11h-13z" fill="#fff" stroke="#7f8894" /><path d="M1 3h14" stroke="#7f8894" strokeWidth="2" /><Globe x={5} y={5.5} k={0.3} /></Svg></IconSlot>
              Examinar *:80 (http)
            </Action>
            <Divider $gap />
            <Action $tall $ls={-0.27}><IconSlot />Configuración avanzada...</Action>
            <Divider />
            <Action $tall><IconSlot><HelpIcon /></IconSlot>Ayuda</Action>
          </Actions>
        </SidePanel>
      </Body>

      <StatusBar>
        <StatusText>Listo</StatusText>
        <svg width="28" height="14" viewBox="0 0 28 14">
          <Globe x={1} y={0} k={0.4} /><SmallServer x={8} y={1} /><path d="M19 11h2M23 11h2M23 7h2" stroke="#9a9a9a" strokeWidth="2" />
        </svg>
      </StatusBar>
    </Window>
  );
}
